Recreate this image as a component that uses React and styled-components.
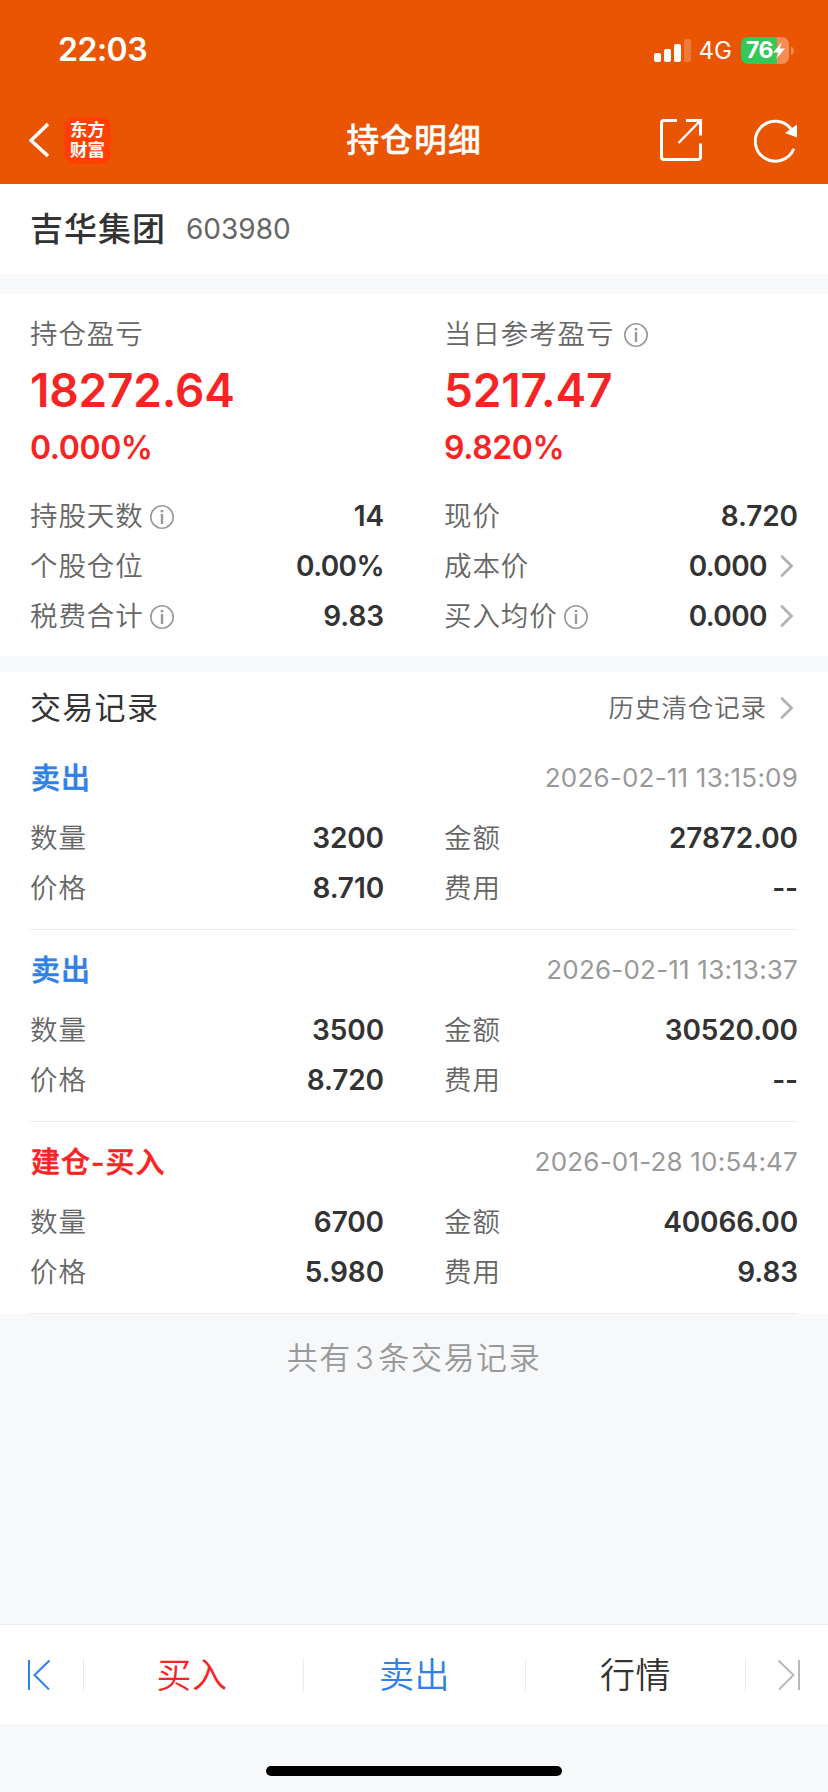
import React from "react"
import styled, { createGlobalStyle } from "styled-components"

const GlobalStyle = createGlobalStyle`
  * {
    box-sizing: border-box;
  }
  body {
    margin: 0;
    background: #f6f8fa;
    font-family: Inter, "Noto Sans CJK SC", sans-serif;
    color: #333333;
  }
`

const Screen = styled.div`
  width: 828px;
  height: 1792px;
  display: flex;
  flex-direction: column;
  background: #f6f8fa;
  overflow: hidden;
  white-space: nowrap;
`

const Header = styled.header`
  height: 184px;
  flex: none;
  background: #ea5504;
  color: #ffffff;
`

const StatusBar = styled.div`
  height: 96px;
  padding: 4px 34px 0 58px;
  display: flex;
  align-items: center;
  justify-content: space-between;
`

const Clock = styled.span`
  font-size: 32px;
  font-weight: 600;
  line-height: 40px;
  letter-spacing: -0.5px;
`

const StatusIcons = styled.div`
  display: flex;
  align-items: center;
`

const Network = styled.span`
  font-size: 24px;
  line-height: 30px;
  margin: 2px 9px 0 8px;
`

const Battery = styled.div`
  position: relative;
  width: 53px;
  height: 27px;
`

const BatteryLevel = styled.span`
  position: absolute;
  left: 5px;
  top: 0;
  font-size: 23px;
  font-weight: 700;
  line-height: 27px;
  letter-spacing: -0.5px;
`

const NavBar = styled.div`
  height: 88px;
  display: grid;
  grid-template-columns: 300px 1fr 300px;
  align-items: center;
`

const NavSide = styled.div`
  display: flex;
  align-items: center;
  justify-content: ${props => (props.$end ? "flex-end" : "flex-start")};
  gap: ${props => (props.$end ? 51 : 15)}px;
  padding: ${props => (props.$end ? "1px 30px 0 0" : "0 0 0 29px")};
`

const Logo = styled.div`
  width: 47px;
  height: 47px;
  border-radius: 9px;
  background: #ff4000;
  font-size: 17.5px;
  font-weight: 700;
  line-height: 20px;
  padding: 3px 0 0 6px;
`

const PageTitle = styled.h1`
  margin: 0;
  text-align: center;
  font-size: 33px;
  font-weight: 500;
  line-height: 44px;
  letter-spacing: 0.9px;
  -webkit-text-stroke: 0.3px currentColor;
`

const StockBar = styled.section`
  height: 90px;
  flex: none;
  margin-bottom: 20px;
  padding: 0 30px;
  display: flex;
  align-items: center;
  background: #ffffff;
`

const StockName = styled.h2`
  margin: 0 20px 0 0;
  font-size: 33px;
  font-weight: 500;
  line-height: 44px;
  letter-spacing: 1px;
`

const StockCode = styled.span`
  font-size: 28px;
  line-height: 44px;
  color: #666666;
`

const Panel = styled.section`
  flex: none;
  background: #ffffff;
  padding: 0 30px;
`

const Summary = styled(Panel)`
  height: 362px;
  margin-bottom: 16px;
  padding-top: 20px;
`

const Columns = styled.div`
  display: grid;
  grid-template-columns: 354px 354px;
  column-gap: 60px;
`

const Cell = styled.div`
  height: 50px;
  display: flex;
  align-items: center;
`

const Label = styled.span`
  font-size: 27.5px;
  font-weight: 350;
  line-height: 40px;
  letter-spacing: 0.9px;
  color: #666666;
`

const Value = styled.span`
  margin-left: auto;
  font-size: 28px;
  font-weight: 600;
  line-height: 40px;
  letter-spacing: ${props => (props.$tight ? -0.6 : -0.1)}px;
`

const Profit = styled.div`
  height: 177px;
  color: #f82323;
`

const ProfitLabel = styled.div`
  display: flex;
  align-items: center;
  height: 40px;
`

const Amount = styled.div`
  font-size: 46px;
  font-weight: 600;
  line-height: 56px;
  margin-top: 8px;
  letter-spacing: -0.2px;
`

const Percent = styled.div`
  font-size: 32px;
  font-weight: 600;
  line-height: 40px;
  margin-top: 10px;
  letter-spacing: -0.4px;
`

const SectionHead = styled.div`
  height: 66px;
  padding-top: 5px;
  display: flex;
  align-items: center;
  justify-content: space-between;
`

const SectionTitle = styled.h3`
  margin: 0;
  font-size: 31px;
  font-weight: 400;
  line-height: 44px;
  letter-spacing: 1.3px;
`

const HistoryLink = styled.a`
  display: flex;
  align-items: center;
  font-size: 25.5px;
  font-weight: 350;
  line-height: 40px;
  letter-spacing: 0.9px;
  color: #666666;
`

const Record = styled.article`
  height: 192px;
  padding-top: 12px;
  border-bottom: 1px solid #ededed;
`

const RecordHead = styled.div`
  height: 56px;
  margin-bottom: 7px;
  display: flex;
  align-items: center;
  justify-content: space-between;
`

const Action = styled.span`
  padding: 2px 0 0 1px;
  font-size: 29px;
  font-weight: 500;
  line-height: 40px;
  letter-spacing: 1px;
  color: ${props => (props.$buy ? "#f82323" : "#2f80e8")};
  -webkit-text-stroke: 0.5px currentColor;
`

const Time = styled.time`
  font-size: 26px;
  line-height: 40px;
  letter-spacing: 0.2px;
  color: #999999;
`

const Total = styled.p`
  margin: 22px 0 0;
  font-size: 31px;
  font-weight: 350;
  line-height: 44px;
  letter-spacing: 1.6px;
  text-align: center;
  color: #999999;
`

const Count = styled.span`
  margin: 0 3px;
`

const Footer = styled.footer`
  margin-top: auto;
  flex: none;
  height: 168px;
`

const TabBar = styled.nav`
  height: 100px;
  border-top: 1px solid #ebebeb;
  background: #ffffff;
  display: grid;
  grid-template-columns: 84px 220px 222px 220px 82px;
  align-items: center;
`

const Tab = styled.div`
  height: 34px;
  display: flex;
  align-items: center;
  justify-content: center;
  border-right: ${props => (props.$last ? "none" : "1px solid #ebebeb")};
  padding: ${props => props.$pad || 0};
  font-size: 35px;
  font-weight: 350;
  line-height: 34px;
  letter-spacing: 0.4px;
  color: ${props => props.$color};
`

const HomeIndicator = styled.div`
  width: 296px;
  height: 10px;
  margin: 42px auto 0;
  border-radius: 5px;
  background: #000000;
`

const Arrow = styled.svg`
  width: 14px;
  height: 24px;
  margin: 0 4px 0 13px;
`

const InfoSvg = styled.svg`
  width: 24px;
  height: 24px;
  margin: 1px 0 0 ${props => props.$gap}px;
`

const Info = ({ gap = 6 }) => (
  <InfoSvg viewBox="0 0 24 24" fill="none" $gap={gap}>
    <circle cx="12" cy="12" r="11.2" stroke="#999999" strokeWidth="1.6" />
    <circle cx="12" cy="6.2" r="1.4" fill="#999999" />
    <path d="M12 9V19" stroke="#999999" strokeWidth="2.400" />
  </InfoSvg>
)

const Chevron = () => (
  <Arrow viewBox="0 0 14 24" fill="none">
    <path
      d="M2 2.500L11.500 12L2 21.500"
      stroke="#b2b2b2"
      strokeWidth="2.800"
      strokeLinecap="round"
    />
  </Arrow>
)

const Signal = () => (
  <svg width="37" height="23" viewBox="0 0 37 23" fill="#fff">
    <rect x="0" y="14" width="7" height="9" rx="2" />
    <rect x="10" y="10" width="7" height="13" rx="2" />
    <rect x="20" y="5" width="7" height="18" rx="2" />
    <rect x="30" y="0" width="7" height="23" rx="2" opacity="0.22" />
  </svg>
)

const BatteryIcon = () => (
  <Battery>
    <svg width="53" height="27" viewBox="0 0 53 27">
      <path d="M7 0H36V27H7a7 7 0 0 1-7-7V7a7 7 0 0 1 7-7z" fill="#34c759" />
      <path
        d="M36 0h5a7 7 0 0 1 7 7v13a7 7 0 0 1-7 7h-5zM50 9.500q3 1 3 4.300t-3 4.300z"
        fill="#fff"
        opacity="0.33"
      />
      <path d="M41 5L32 15.500h5.500L35 22l9-10.500h-5.500z" fill="#fff" />
    </svg>
    <BatteryLevel>76</BatteryLevel>
  </Battery>
)

const BackIcon = () => (
  <svg width="20" height="36" viewBox="0 0 20 36" fill="none">
    <path d="M19 2L2 18.500 19 34" stroke="#fff" strokeWidth="3.600" />
  </svg>
)

const ShareIcon = () => (
  <svg width="43" height="43" viewBox="0 0 43 43" fill="none" stroke="#fff">
    <path
      d="M17 1.500H4Q1.500 1.500 1.500 4V38Q1.500 40.500 4 40.500H38Q40.500 40.500 40.500 38V24.500"
      strokeWidth="3"
    />
    <path d="M26 1.500H40.500V16.500" strokeWidth="3" />
    <path d="M39.500 2.500L18.500 24" strokeWidth="2.400" />
  </svg>
)

const RefreshIcon = () => (
  <svg width="44" height="44" viewBox="0 0 44 44" fill="none">
    <path
      d="M39.800 29.800A20 20 0 1 1 37.500 10.500"
      stroke="#fff"
      strokeWidth="3"
    />
    <path d="M43 5.500V18.500L31 14z" fill="#fff" />
  </svg>
)

const FirstIcon = () => (
  <svg width="24" height="32" viewBox="0 0 24 32" fill="none" stroke="#2f80e8">
    <path d="M2 1V31M22.500 1.500L7.500 16L22 30.500" strokeWidth="2" />
  </svg>
)

const LastIcon = () => (
  <svg width="24" height="32" viewBox="0 0 24 32" fill="none" stroke="#b8b8b8">
    <path d="M22 1V31M1.500 1.500L16.500 16L2 30.500" strokeWidth="2" />
  </svg>
)

const Row = ({ label, value, info, link, tight }) => (
  <Cell>
    <Label>{label}</Label>
    {info && <Info />}
    <Value $tight={tight}>{value}</Value>
    {link && <Chevron />}
  </Cell>
)

const stats = [
  { label: "持股天数", value: "14", info: true },
  { label: "现价", value: "8.720" },
  { label: "个股仓位", value: "0.00%", tight: true },
  { label: "成本价", value: "0.000", link: true, tight: true },
  { label: "税费合计", value: "9.83", info: true },
  { label: "买入均价", value: "0.000", info: true, link: true, tight: true },
]

const records = [
  {
    action: "卖出",
    time: "2026-02-11 13:15:09",
    count: "3200",
    amount: "27872.00",
    price: "8.710",
    fee: "--",
  },
  {
    action: "卖出",
    time: "2026-02-11 13:13:37",
    count: "3500",
    amount: "30520.00",
    price: "8.720",
    fee: "--",
  },
  {
    action: "建仓-买入",
    buy: true,
    time: "2026-01-28 10:54:47",
    count: "6700",
    amount: "40066.00",
    price: "5.980",
    fee: "9.83",
  },
]

const App = () => (
  <>
    <GlobalStyle />
    <Screen>
      <Header>
        <StatusBar>
          <Clock>22:03</Clock>
          <StatusIcons>
            <Signal />
            <Network>4G</Network>
            <BatteryIcon />
          </StatusIcons>
        </StatusBar>
        <NavBar>
          <NavSide>
            <BackIcon />
            <Logo>
              东方
              <br />
              财富
            </Logo>
          </NavSide>
          <PageTitle>持仓明细</PageTitle>
          <NavSide $end>
            <ShareIcon />
            <RefreshIcon />
          </NavSide>
        </NavBar>
      </Header>
      <StockBar>
        <StockName>吉华集团</StockName>
        <StockCode>603980</StockCode>
      </StockBar>
      <Summary>
        <Columns>
          <Profit>
            <ProfitLabel>
              <Label>持仓盈亏</Label>
            </ProfitLabel>
            <Amount>18272.64</Amount>
            <Percent>0.000%</Percent>
          </Profit>
          <Profit>
            <ProfitLabel>
              <Label>当日参考盈亏</Label>
              <Info gap={10} />
            </ProfitLabel>
            <Amount>5217.47</Amount>
            <Percent>9.820%</Percent>
          </Profit>
        </Columns>
        <Columns>
          {stats.map(stat => (
            <Row {...stat} key={stat.label} />
          ))}
        </Columns>
      </Summary>
      <Panel>
        <SectionHead>
          <SectionTitle>交易记录</SectionTitle>
          <HistoryLink>
            历史清仓记录
            <Chevron />
          </HistoryLink>
        </SectionHead>
        {records.map(record => (
          <Record key={record.time}>
            <RecordHead>
              <Action $buy={record.buy}>{record.action}</Action>
              <Time>{record.time}</Time>
            </RecordHead>
            <Columns>
              <Row label="数量" value={record.count} />
              <Row label="金额" value={record.amount} />
              <Row label="价格" value={record.price} />
              <Row label="费用" value={record.fee} />
            </Columns>
          </Record>
        ))}
      </Panel>
      <Total>
        共有<Count>{records.length}</Count>条交易记录
      </Total>
      <Footer>
        <TabBar>
          <Tab $pad="0 6px 0 0">
            <FirstIcon />
          </Tab>
          <Tab $color="#f82323" $pad="0 3px 0 0">
            买入
          </Tab>
          <Tab $color="#2f80e8">卖出</Tab>
          <Tab $color="#333333">行情</Tab>
          <Tab $last $pad="0 0 0 3px">
            <LastIcon />
          </Tab>
        </TabBar>
        <HomeIndicator />
      </Footer>
    </Screen>
  </>
)

export default App
